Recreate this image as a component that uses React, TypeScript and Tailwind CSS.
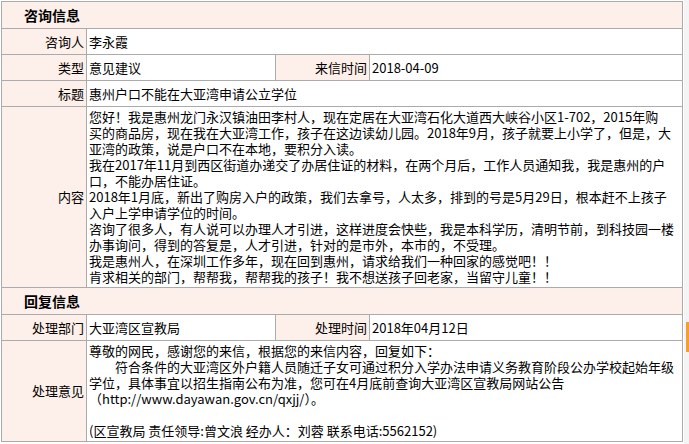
import React from 'react';

const font = { fontFamily: '"Noto Sans CJK SC", "Noto Sans", sans-serif' };

const contentLines = [
  '您好！我是惠州龙门永汉镇油田李村人，现在定居在大亚湾石化大道西大峡谷小区1-702，2015年购',
  '买的商品房，现在我在大亚湾工作，孩子在这边读幼儿园。2018年9月，孩子就要上小学了，但是，大',
  '亚湾的政策，说是户口不在本地，要积分入读。',
  '我在2017年11月到西区街道办递交了办居住证的材料，在两个月后，工作人员通知我，我是惠州的户',
  '口，不能办居住证。',
  '2018年1月底，新出了购房入户的政策，我们去拿号，人太多，排到的号是5月29日，根本赶不上孩子',
  '入户上学申请学位的时间。',
  '咨询了很多人，有人说可以办理人才引进，这样进度会快些，我是本科学历，清明节前，到科技园一楼',
  '办事询问，得到的答复是，人才引进，针对的是市外，本市的，不受理。',
  '我是惠州人，在深圳工作多年，现在回到惠州，请求给我们一种回家的感觉吧！！',
  '肯求相关的部门，帮帮我，帮帮我的孩子！我不想送孩子回老家，当留守儿童！！',
];

const replyLines = [
  '尊敬的网民，感谢您的来信，根据您的来信内容，回复如下：',
  '\u3000\u3000符合条件的大亚湾区外户籍人员随迁子女可通过积分入学办法申请义务教育阶段公办学校起始年级',
  '学位，具体事宜以招生指南公布为准，您可在4月底前查询大亚湾区宣教局网站公告',
  '（http://www.dayawan.gov.cn/qxjj/）。',
  '\u00a0',
  '(区宣教局 责任领导:曾文浪 经办人：刘蓉 联系电话:5562152)',
];

const label = 'border border-[#ababab] bg-[#fdefe9] pr-[2px] text-right align-middle';
const value = 'border border-[#ababab] bg-white pl-[2px] text-left align-middle';

function Header({ text }: { text: string }) {
  return (
    <tr className="h-[27px]">
      <td colSpan={4} className="border border-[#ababab] bg-[#fdefe9] pl-[22px] text-[14px] font-bold">
        {text}
      </td>
    </tr>
  );
}

function Lines({ lines }: { lines: string[] }) {
  return (
    <div className="py-[2px]">
      {lines.map((l, i) => (
        <div key={i} className="whitespace-pre leading-[16px]">
          {l}
        </div>
      ))}
    </div>
  );
}

export default function App() {
  return (
    <div className="relative h-[444px] w-[689px] overflow-hidden bg-white text-[13px] leading-[16px] text-black" style={font}>
      <table className="ml-px mt-px w-[681px] table-fixed border-collapse">
        <colgroup>
          <col className="w-[85px]" />
          <col className="w-[189px]" />
          <col className="w-[94px]" />
          <col className="w-[313px]" />
        </colgroup>
        <tbody>
          <Header text="咨询信息" />
          <tr className="h-[26px]">
            <td className={label}>咨询人</td>
            <td colSpan={3} className={value}>李永霞</td>
          </tr>
          <tr className="h-[26px]">
            <td className={label}>类型</td>
            <td className={value}>意见建议</td>
            <td className={label}>来信时间</td>
            <td className={value}>2018-04-09</td>
          </tr>
          <tr className="h-[26px]">
            <td className={label}>标题</td>
            <td colSpan={3} className={value}>惠州户口不能在大亚湾申请公立学位</td>
          </tr>
          <tr className="h-[180px]">
            <td className={label}>内容</td>
            <td colSpan={3} className={value}>
              <Lines lines={contentLines} />
            </td>
          </tr>
          <Header text="回复信息" />
          <tr className="h-[26px]">
            <td className={label}>处理部门</td>
            <td className={value}>大亚湾区宣教局</td>
            <td className={label}>处理时间</td>
            <td className={value}>2018年04月12日</td>
          </tr>
          <tr className="h-[101px]">
            <td className={label}>处理意见</td>
            <td colSpan={3} className={value}>
              <Lines lines={replyLines} />
            </td>
          </tr>
        </tbody>
      </table>

      {/* page-side strip with orange marker */}
      <div className="absolute right-0 top-0 h-full w-[5px] bg-[#f4f4f4]">
        <div className="absolute right-0 top-[322px] h-[30px] w-[3px] bg-[#f5a02e]" />
      </div>
    </div>
  );
}
